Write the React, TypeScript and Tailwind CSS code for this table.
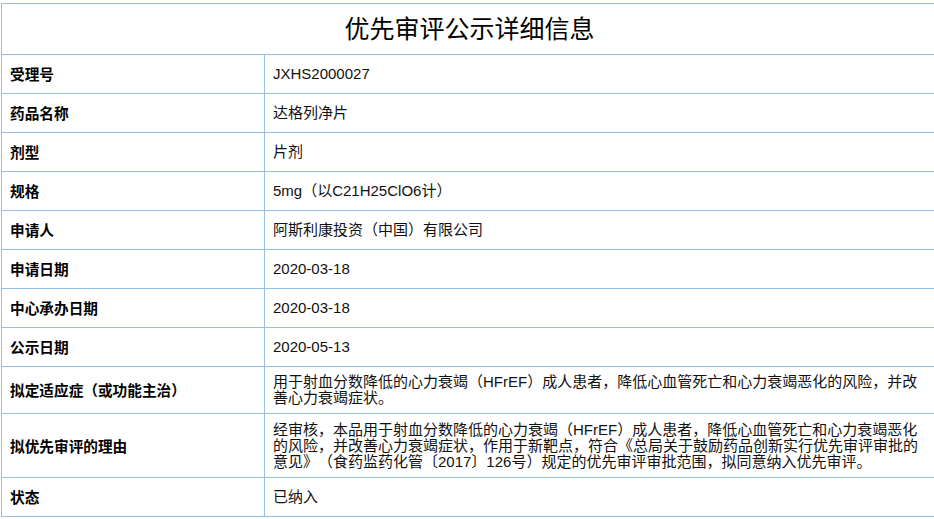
import React from 'react'

type Row = { label: string; value: React.ReactNode; h: string }

const rows: Row[] = [
  { label: '受理号', value: 'JXHS2000027', h: 'h-[38px]' },
  { label: '药品名称', value: '达格列净片', h: 'h-[38px]' },
  { label: '剂型', value: '片剂', h: 'h-[38px]' },
  { label: '规格', value: '5mg（以C21H25ClO6计）', h: 'h-[38px]' },
  { label: '申请人', value: '阿斯利康投资（中国）有限公司', h: 'h-[38px]' },
  { label: '申请日期', value: '2020-03-18', h: 'h-[38px]' },
  { label: '中心承办日期', value: '2020-03-18', h: 'h-[38px]' },
  { label: '公示日期', value: '2020-05-13', h: 'h-[38px]' },
  {
    label: '拟定适应症（或功能主治）',
    value: (
      <>
        用于射血分数降低的心力衰竭（HFrEF）成人患者，降低心血管死亡和心力衰竭恶化的风险，并改
        <br />
        善心力衰竭症状。
      </>
    ),
    h: 'h-[46px]',
  },
  {
    label: '拟优先审评的理由',
    value: (
      <>
        经审核，本品用于射血分数降低的心力衰竭（HFrEF）成人患者，降低心血管死亡和心力衰竭恶化
        <br />
        的风险，并改善心力衰竭症状，作用于新靶点，符合《总局关于鼓励药品创新实行优先审评审批的
        <br />
        意见》（食药监药化管〔2017〕126号）规定的优先审评审批范围，拟同意纳入优先审评。
      </>
    ),
    h: 'h-[63px]',
  },
  { label: '状态', value: '已纳入', h: 'h-[38px]' },
]

export default function App() {
  return (
    <div className="w-[934px] h-[519px] overflow-hidden bg-white pt-[3px] pl-px">
      <div className="w-[936px] border-l border-t border-[#94bfe6] text-[14.667px] text-[#111] [text-spacing-trim:space-all]">
        {/* Header */}
        <div className="h-[51px] border-b border-[#94bfe6] flex items-center justify-center pb-[3px]">
          <h1 className="text-[25px] leading-none text-black font-['Noto_Sans_CJK_SC',serif]">
            优先审评公示详细信息
          </h1>
        </div>

        {rows.map((r) => (
          <div key={r.label} className={`flex border-b border-[#94bfe6] ${r.h} box-content`}>
            <div className="w-[263px] shrink-0 border-r border-[#94bfe6] flex items-center pl-2 font-bold text-black font-['Noto_Sans_CJK_SC',sans-serif]">
              {r.label}
            </div>
            <div className="flex-1 flex items-center pl-2 text-[15px] leading-4 whitespace-nowrap font-['Liberation_Sans','Noto_Sans_CJK_SC',sans-serif]">
              <div>{r.value}</div>
            </div>
          </div>
        ))}
      </div>
    </div>
  )
}
